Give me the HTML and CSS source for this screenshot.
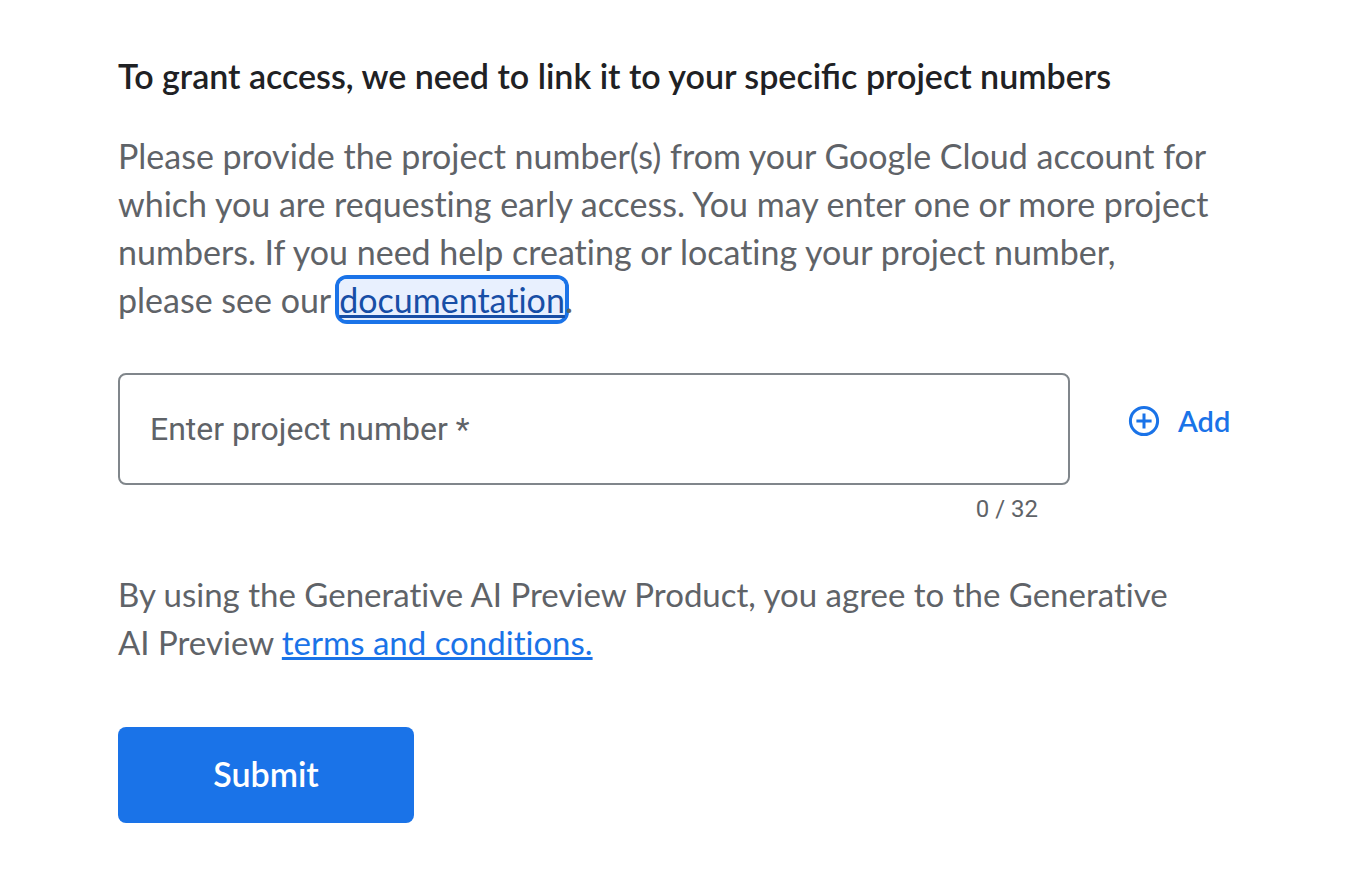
FILE: index.html
```html
<!DOCTYPE html>
<html lang="en">
<head>
<meta charset="utf-8">
<meta name="viewport" content="width=device-width, initial-scale=1">
<title>Link project numbers</title>
<link rel="stylesheet" href="styles.css">
</head>
<body>
<main class="page">
  <form class="form">
    <h1 class="title">To grant access, we need to link it to your specific project numbers</h1>
    <p class="text intro">Please provide the project number(s) from your Google Cloud account for<br>which you are requesting early access. You may enter one or more project<br>numbers. If you need help creating or locating your project number,<br>please see our <a class="link doc-link" href="#documentation">documentation</a>.</p>
    <div class="entry">
      <div class="field">
        <input class="input" type="text" maxlength="32" placeholder="Enter project number *" aria-label="Enter project number" required>
        <div class="counter">0 / 32</div>
      </div>
      <button class="add" type="button">
        <svg class="add-icon" viewBox="0 0 32 32" aria-hidden="true"><circle cx="16" cy="16" r="13.6"/><path d="M16 8.4v15.2M8.4 16h15.2"/></svg>
        Add
      </button>
    </div>
    <p class="text terms">By using the Generative AI Preview Product, you agree to the Generative<br>AI Preview <a class="link" href="#terms">terms and conditions.</a></p>
    <button class="submit" type="submit">Submit</button>
  </form>
</main>
</body>
</html>
```
FILE: styles.css
```css
* {
  box-sizing: border-box;
}

body {
  margin: 0;
  background: #fff;
  color: #5f6368;
  font-family: Lato, "Liberation Sans", sans-serif;
}

.page {
  padding: 52px 118px 63px;
}

.title {
  margin: 0;
  color: #202124;
  font-size: 34px;
  font-weight: 600;
  line-height: 48px;
}

.text {
  margin: 0;
  font-size: 33px;
  font-variant-ligatures: none;
  line-height: 48px;
}

.intro {
  margin-top: 32px;
  font-size: 34px;
}

.link {
  color: #1a73e8;
  text-decoration-thickness: 3px;
  text-underline-offset: 2px;
}

.doc-link {
  border-radius: 8px;
  background: #e8f0fe;
  box-shadow: 0 0 0 4px #1a73e8;
  color: #174ea6;
}

.entry {
  display: flex;
  align-items: flex-start;
  gap: 58px;
  margin-top: 49px;
}

.field {
  flex: 0 1 952px;
}

.input {
  display: block;
  width: 100%;
  height: 112px;
  padding: 0 30px;
  border: 2px solid #80868b;
  border-radius: 8px;
  background: #fff;
  color: #202124;
  font-family: Roboto, sans-serif;
  font-size: 32px;
}

.input::placeholder {
  color: #5f6368;
  opacity: 1;
}

.counter {
  padding: 8px 32px 0 0;
  font-family: Roboto, sans-serif;
  font-size: 24px;
  line-height: 32px;
  text-align: right;
}

.add {
  display: flex;
  align-items: center;
  gap: 18px;
  margin-top: 24px;
  padding: 0;
  border: 0;
  background: none;
  color: #1a73e8;
  font-family: inherit;
  font-size: 29px;
  font-weight: 600;
  line-height: 48px;
}

.add-icon {
  width: 32px;
  height: 32px;
  fill: none;
  stroke: currentColor;
  stroke-width: 3;
}

.terms {
  margin-top: 45px;
}

.submit {
  display: block;
  width: 296px;
  height: 96px;
  margin-top: 61px;
  padding: 0 0 3px;
  border: 0;
  border-radius: 8px;
  background: #1a73e8;
  color: #fff;
  font-family: inherit;
  font-size: 34px;
  font-weight: 600;
}
```
